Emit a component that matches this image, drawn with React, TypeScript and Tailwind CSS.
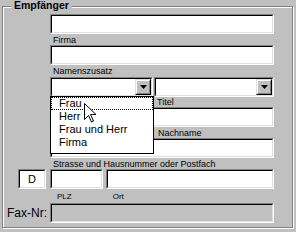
import React from 'react';

const Field: React.FC<{ w: string; gray?: boolean; children?: React.ReactNode }> = ({ w, gray, children }) => (
	<div className={ `${w} h-[20px] border border-t-[#808080] border-l-[#808080] border-b-white border-r-white` }>
		<div className={ `h-full border border-t-black border-l-black border-b-[#dfdfdf] border-r-[#dfdfdf] ${gray ? 'bg-[#c0c0c0]' : 'bg-white'} flex items-center justify-center text-[11px] leading-none` }>
			{ children }
		</div>
	</div>
);

const Combo: React.FC<{ w: string }> = ({ w }) => (
	<div className={ `${w} h-[20px] border border-t-[#808080] border-l-[#808080] border-b-white border-r-white` }>
		<div className="h-full flex justify-end border border-t-black border-l-black border-b-[#dfdfdf] border-r-[#dfdfdf] bg-white">
			<div className="w-[16px] h-full border border-t-[#dfdfdf] border-l-[#dfdfdf] border-b-black border-r-black">
				<div className="h-full flex items-center justify-center bg-[#c0c0c0] border border-t-white border-l-white border-b-[#808080] border-r-[#808080]">
					<svg width="7" height="4" viewBox="0 0 7 4">
						<path d="M0 0h7L3.5 4z" fill="#000" />
					</svg>
				</div>
			</div>
		</div>
	</div>
);

const Label: React.FC<{ h: string; pl: string; pb?: string; lh?: string; children: React.ReactNode }> = ({ h, pl, pb = '', lh = 'leading-none', children }) => (
	<div className={ `${h} ${pl} ${pb} flex items-end text-[9px] ${lh} whitespace-nowrap` }>
		<span>{ children }</span>
	</div>
);

export default function App() {
	const items = ['Frau', 'Herr', 'Frau und Herr', 'Firma'];

	return (
		<div className="w-[296px] h-[232px] bg-[#c0c0c0] pt-[6px] pl-[2px] overflow-hidden text-black font-['Liberation_Sans',Arial,sans-serif]">
			<div className="relative w-[291px] h-[222px] border border-[#808080] shadow-[inset_1px_1px_0_#fff,1px_1px_0_#fff]">
				<div className="absolute left-[8px] top-[-8px] px-[3px] bg-[#c0c0c0] text-[10.5px] font-bold leading-[12px]">
					Empfänger
				</div>

				<div className="pt-[7px]">
					<div className="ml-[47px]">
						<Field w="w-[224px]" />
						<Label h="h-[11px]" pl="pl-[3px]">Firma</Label>
						<Field w="w-[224px]" />
						<Label h="h-[12px]" pl="pl-[3px]" pb="pb-[1px]">Namenszusatz</Label>
						<div className="flex gap-[1px]">
							<Combo w="w-[103px]" />
							<Combo w="w-[120px]" />
						</div>
						<Label h="h-[10px]" pl="pl-[107px]">Titel</Label>
						<Field w="w-[224px]" />
						<Label h="h-[11px]" pl="pl-[108px]">Nachname</Label>
						<Field w="w-[224px]" />
						<Label h="h-[11px]" pl="pl-[3px]" lh="leading-[9px]">Strasse und Hausnummer oder Postfach</Label>
					</div>

					<div className="flex">
						<div className="ml-[15px]">
							<Field w="w-[28px]">D</Field>
						</div>
						<div className="ml-[4px]">
							<Field w="w-[53px]" />
						</div>
						<div className="ml-[3px]">
							<Field w="w-[168px]" />
						</div>
					</div>
					<div className="h-[14px] pb-[2px] flex items-end text-[8px] leading-none">
						<span className="ml-[54px]">PLZ</span>
						<span className="ml-[41px]">Ort</span>
					</div>
					<div className="flex items-center">
						<div className="w-[47px] pr-[3px] text-right text-[12px] leading-none">Fax-Nr:</div>
						<Field w="w-[224px]" gray />
					</div>
				</div>

				<div className="absolute left-[47px] top-[89px] w-[104px] h-[58px] bg-white border border-black text-[11px] leading-[13px]">
					{ items.map((item, i) => (
						<div
							key={ item }
							className={ `h-[13px] pl-[8px] whitespace-nowrap ${i === 0 ? 'outline outline-1 outline-dotted outline-black -outline-offset-1' : ''}` }
						>
							{ item }
						</div>
					)) }
				</div>

				<svg className="absolute left-[81px] top-[96px]" width="12" height="20" viewBox="0 0 12 20">
					<path d="M0.5 0.5v16l4-4 3 6.5 2-1-3-6.5h5.5z" fill="#fff" stroke="#000" strokeWidth="1" />
				</svg>
			</div>
		</div>
	);
}
